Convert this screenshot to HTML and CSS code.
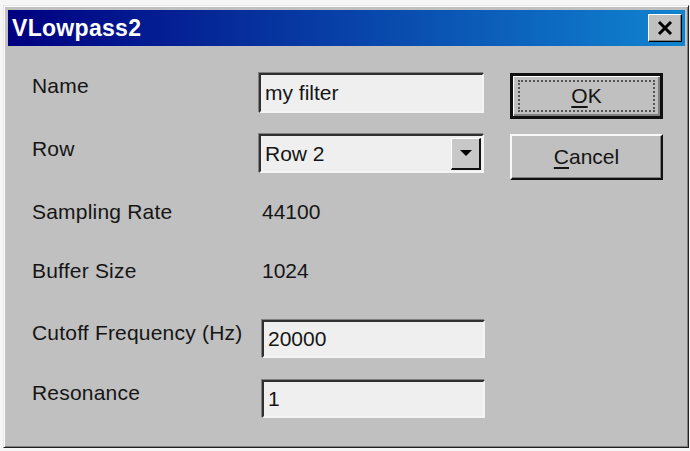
FILE: index.html
```html
<!DOCTYPE html>
<html lang="en">
<head>
<meta charset="UTF-8">
<title>VLowpass2</title>
<link rel="stylesheet" href="styles.css">
</head>
<body>
<div class="window">
    <div class="title-bar">
        <span class="title">VLowpass2</span>
        <button class="close-btn" title="Close">
            <svg width="16" height="14" viewBox="0 0 16 14">
                <path d="M2 1 L14 13 M14 1 L2 13" stroke="#000" stroke-width="3"/>
            </svg>
        </button>
    </div>
    <div class="content">
        <div class="form">
            <div class="label">Name</div>
            <div class="field"><div class="input">my filter</div></div>

            <div class="label label-row">Row</div>
            <div class="field">
                <div class="input select">
                    <span>Row 2</span>
                    <span class="drop-btn"><span class="arrow"></span></span>
                </div>
            </div>

            <div class="label">Sampling Rate</div>
            <div class="value">44100</div>

            <div class="label">Buffer Size</div>
            <div class="value">1024</div>

            <div class="label">Cutoff Frequency (Hz)</div>
            <div class="field"><div class="input input-short">20000</div></div>

            <div class="label">Resonance</div>
            <div class="field"><div class="input input-short">1</div></div>
        </div>
        <div class="actions">
            <button class="btn btn-default"><span class="focus"><u>O</u>K</span></button>
            <button class="btn"><span><u>C</u>ancel</span></button>
        </div>
    </div>
</div>
</body>
</html>
```

FILE: styles.css
```css
body {
    margin: 0;
    padding: 0;
    background-color: #f6f6f6;
    font-family: "Liberation Sans", Arial, sans-serif;
}
.window {
    width: 677px;
    height: 434px;
    margin: 5px 0 0 3px;
    background-color: #c0c0c0;
    border-top: 1px solid #e8e8e8;
    border-left: 1px solid #e8e8e8;
    border-right: 1px solid #202020;
    border-bottom: 1px solid #202020;
    box-shadow: inset 1px 1px 0 #ffffff, inset -1px -1px 0 #808080;
    padding: 4px 3px 3px 4px;
}
.title-bar {
    height: 36px;
    display: flex;
    align-items: center;
    justify-content: space-between;
    background: linear-gradient(to right, #000080, #1084d0);
    padding: 0 3px 0 4px;
}
.title {
    color: #fff;
    font-weight: bold;
    font-size: 23px;
    letter-spacing: 0.3px;
}
.close-btn {
    width: 34px;
    height: 28px;
    padding: 0;
    display: flex;
    align-items: center;
    justify-content: center;
    background-color: #c0c0c0;
    border-top: 1px solid #fff;
    border-left: 1px solid #fff;
    border-right: 1px solid #000;
    border-bottom: 1px solid #000;
    box-shadow: inset -1px -1px 0 #808080;
}
.content {
    display: flex;
    padding: 27px 0 0 24px;
}
.form {
    display: grid;
    grid-template-columns: 227px 225px;
    grid-template-rows: 61px 65px 59px 62px 60px 40px;
    align-items: start;
    font-size: 21px;
    line-height: 24px;
    color: #151515;
}
.label {
    padding-top: 1px;
    letter-spacing: 0.2px;
}
.label-row {
    padding-top: 3px;
}
.value {
    padding-left: 3px;
    padding-top: 1px;
}
.input {
    height: 36px;
    display: flex;
    align-items: center;
    padding: 0 6px 0 4px;
    background-color: #efefef;
    border-top: 2px solid #303030;
    border-left: 2px solid #303030;
    border-right: 2px solid #f4f4f4;
    border-bottom: 2px solid #f4f4f4;
    box-shadow: -1px -1px 0 #808080;
}
.input-short {
    margin-left: 3px;
    width: 209px;
    height: 34px;
}
.select {
    justify-content: space-between;
    padding-right: 1px;
    height: 35px;
}
.drop-btn {
    width: 27px;
    height: 29px;
    display: flex;
    align-items: center;
    justify-content: center;
    background-color: #c8c8c8;
    border-top: 1px solid #fff;
    border-left: 1px solid #fff;
    border-right: 2px solid #111;
    border-bottom: 2px solid #111;
}
.arrow {
    width: 0;
    height: 0;
    border-left: 6px solid transparent;
    border-right: 6px solid transparent;
    border-top: 6px solid #000;
}
.actions {
    display: flex;
    flex-direction: column;
    gap: 15px;
    margin-left: 26px;
}
.btn {
    width: 153px;
    height: 46px;
    padding: 0;
    font-family: "Liberation Sans", Arial, sans-serif;
    font-size: 21px;
    color: #151515;
    background-color: #c0c0c0;
    border-top: 2px solid #f8f8f8;
    border-left: 2px solid #f8f8f8;
    border-right: 2px solid #101010;
    border-bottom: 2px solid #101010;
    box-shadow: inset -1px -1px 0 #808080;
}
.btn-default {
    border: 3px solid #101010;
    box-shadow: inset 1px 1px 0 #fff, inset -2px -2px 0 #808080;
}
.btn span {
    display: block;
    line-height: 28px;
}
.btn .focus {
    margin: 0 5px;
    border: 2px dotted #555;
}
.btn u {
    text-underline-offset: 3px;
}
```
